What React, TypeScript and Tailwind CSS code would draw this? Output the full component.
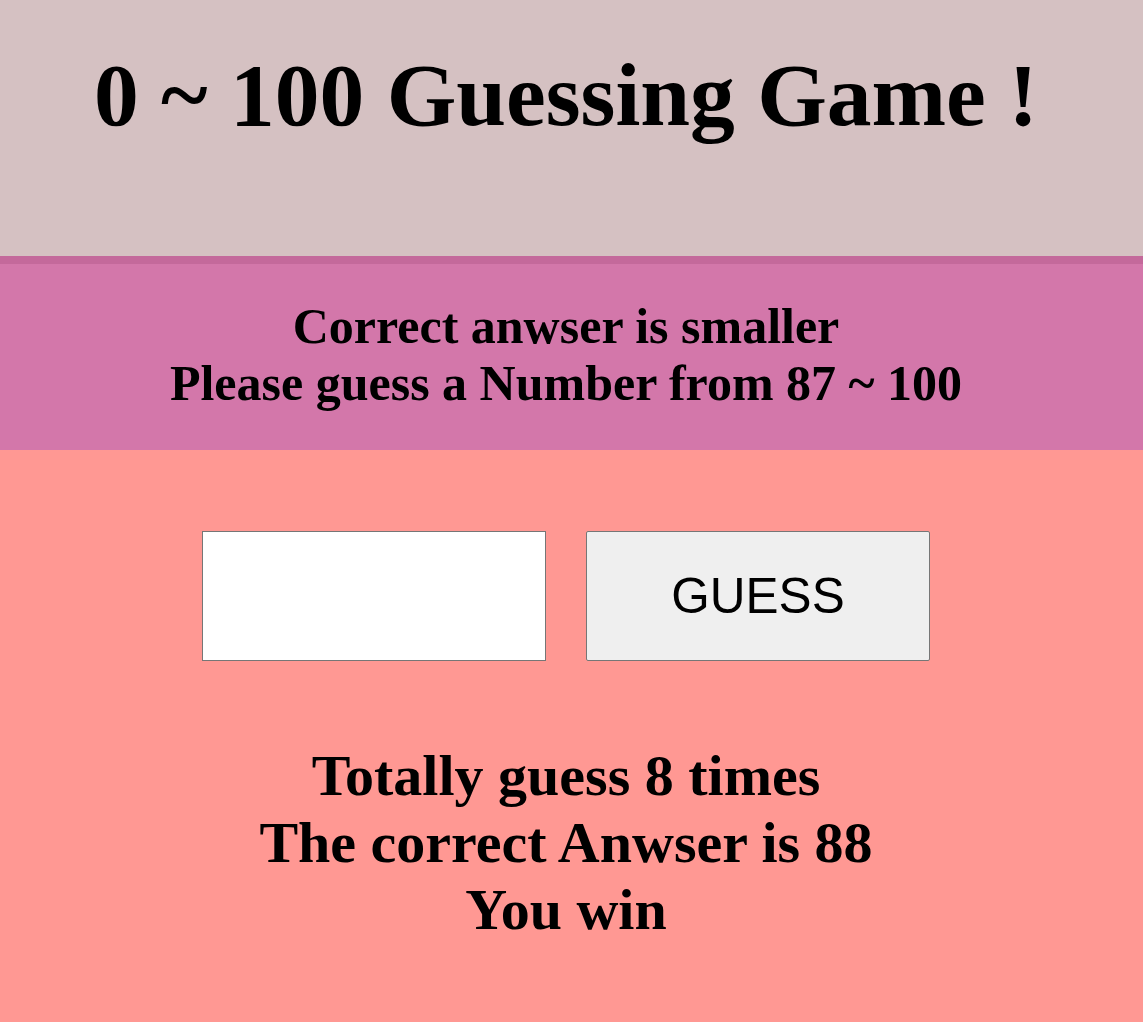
import React from 'react';

const serif = "font-['Liberation_Serif',_'Times_New_Roman',_serif]";

export default function App() {
   return (
      <div className={`${serif} flex min-h-screen flex-col text-black`}>
         <header className="h-[264px] border-b-8 border-[#c4699b] bg-[#d5c1c2] pr-[11px]">
            <h1 className="pt-[44px] text-center text-[89.5px] leading-[1.15] font-bold">
               0 ~ 100 Guessing Game !
            </h1>
         </header>

         <section className="bg-[#d377aa] pt-[34px] pb-[38px] pr-[11px] text-center text-[50px] leading-[57px] font-bold">
            <div>Correct anwser is smaller</div>
            <div>Please guess a Number from 87 ~ 100</div>
         </section>

         <main className="flex-1 bg-[#ff9893] pr-[11px]">
            <div className="mt-[81px] flex justify-center gap-10">
               <input
                  type="text"
                  className="h-[130px] w-[344px] border border-[#767676] bg-white px-2 text-[48px] outline-none"
               />
               <button className="h-[130px] w-[344px] rounded-[2px] border border-[#767676] bg-[#efefef] font-['Liberation_Sans',_Arial,_sans-serif] text-[49.5px]">
                  GUESS
               </button>
            </div>
            <div className="mt-[81px] text-center text-[58px] leading-[67px] font-bold">
               <div>Totally guess 8 times</div>
               <div>The correct Anwser is 88</div>
               <div>You win</div>
            </div>
         </main>
      </div>
   );
}
